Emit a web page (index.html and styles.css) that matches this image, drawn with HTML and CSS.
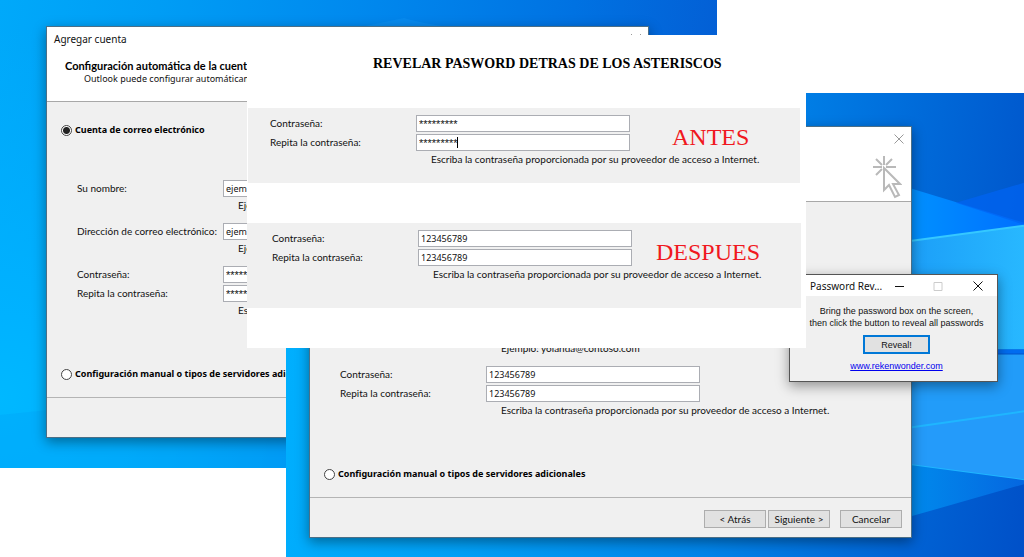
FILE: index.html
```html
<!DOCTYPE html>
<html lang="es">
<head>
<meta charset="utf-8">
<title>Revelar password detras de los asteriscos</title>
<link rel="stylesheet" href="styles.css">
</head>
<body>
<main class="canvas">
  <div class="desktop desktop-back">
    <svg class="wallpaper" viewBox="0 0 717 468" preserveAspectRatio="none" aria-hidden="true">
      <path d="M0 415L286 385V468H0z" fill="#00a6f8" opacity=".4"/>
      <path d="M404 18Q420 23 450 27H360z" fill="#25a5ff" opacity=".2"/>
    </svg>
  </div>

  <section class="window dialog dialog-back">
    <header class="dialog-head">
      <div class="titlebar"><span>Agregar cuenta</span>
        <svg class="close" viewBox="0 0 10 10" aria-hidden="true"><path d="M.5 .5l9 9M9.5 .5l-9 9" stroke="#333"/></svg>
      </div>
      <h2>Configuración automática de la cuenta</h2>
      <p class="sub">Outlook puede configurar automáticamente</p>
    </header>
    <div class="dialog-body">
      <label class="choice"><input type="radio" name="tipo" checked>Cuenta de correo electrónico</label>
      <div class="fields">
        <label for="n1">Su nombre:</label><input id="n1" type="text" value="ejemplo">
        <p class="hint">Ejemplo:</p>
        <label class="next" for="m1">Dirección de correo electrónico:</label><input class="next" id="m1" type="text" value="ejemplo">
        <p class="hint">Ejemplo:</p>
        <label class="next" for="p1">Contraseña:</label><input class="next stars" id="p1" type="text" value="*********">
        <label class="repeat" for="r1">Repita la contraseña:</label><input class="repeat stars" id="r1" type="text" value="*********">
        <p class="hint">Escriba</p>
      </div>
      <label class="choice manual"><input type="radio" name="tipo">Configuración manual o tipos de servidores adicionales</label>
    </div>
    <footer class="dialog-foot"></footer>
  </section>

  <div class="desktop desktop-front">
    <svg class="wallpaper" viewBox="0 0 738 465" preserveAspectRatio="none" aria-hidden="true">
      <defs>
        <linearGradient id="beam" x1="0" y1="0" x2="1" y2="0"><stop offset="0" stop-color="#0090ff"/><stop offset="1" stop-color="#0070ff"/></linearGradient>
        <linearGradient id="pane" x1="0" y1="0" x2="1" y2="0"><stop offset="0" stop-color="#1c9ff8"/><stop offset="1" stop-color="#28b8ff"/></linearGradient>
        <linearGradient id="floor" x1="0" y1="0" x2="1" y2="0"><stop offset="0" stop-color="#0089ec"/><stop offset="1" stop-color="#0567e0"/></linearGradient>
      </defs>
      <path d="M626 96L738 130V240H626z" fill="url(#beam)"/>
      <path d="M670 110L738 90V132z" fill="#0064f4" opacity=".7"/>
      <path d="M626 148L738 133V257H626z" fill="url(#pane)"/>
      <path d="M626 148L738 133" stroke="#35c8ff" stroke-width="2"/>
      <path d="M626 257H738V261H626z" fill="#006cf0"/>
      <path d="M626 262H738V388L626 373z" fill="#229cf9"/>
      <path d="M626 335L738 319V388L626 373z" fill="#249bfa"/>
      <path d="M626 335L738 319M626 373L738 388" stroke="#1fb6ff" stroke-width="2"/>
      <path d="M626 373L738 388V392L626 424z" fill="url(#floor)"/>
    </svg>
  </div>

  <section class="window dialog dialog-front">
    <header class="dialog-head">
      <div class="titlebar"><span></span>
        <svg class="close" viewBox="0 0 10 10" aria-hidden="true"><path d="M.5 .5l9 9M9.5 .5l-9 9" stroke="#999"/></svg>
      </div>
      <svg class="pointer" viewBox="0 0 30 44" aria-hidden="true">
        <g fill="none" stroke="#b9b9b9" stroke-width="2"><path d="M12 1v9M1 12h9M14 12h10M4 4l6 6M20 4l-6 6M4 20l6-6"/><path d="M12 13v22l5-5 6 12 4-2-6-11h7z"/></g>
      </svg>
    </header>
    <div class="dialog-body">
      <div class="fields">
        <p class="hint">Ejemplo: yolanda@contoso.com</p>
        <label class="next" for="p2">Contraseña:</label><input class="next" id="p2" type="text" value="123456789">
        <label class="repeat" for="r2">Repita la contraseña:</label><input class="repeat" id="r2" type="text" value="123456789">
        <p class="hint">Escriba la contraseña proporcionada por su proveedor de acceso a Internet.</p>
      </div>
      <label class="choice manual"><input type="radio" name="manual">Configuración manual o tipos de servidores adicionales</label>
    </div>
    <footer class="dialog-foot">
      <button type="button">&lt; Atrás</button>
      <button type="button">Siguiente &gt;</button>
      <button type="button" class="cancel">Cancelar</button>
    </footer>
  </section>

  <section class="window popup">
    <header class="popup-bar"><span>Password Rev...</span>
      <svg viewBox="0 0 88 10" aria-hidden="true"><path d="M0 5.500h9" stroke="#111"/><path d="M39 1.500h8v8h-8z" fill="none" stroke="#ccc"/><path d="M78.500 .5l9 9M87.500 .5l-9 9" stroke="#111"/></svg>
    </header>
    <div class="popup-body">
      <p>Bring the password box on the screen,<br>then click the button to reveal all passwords</p>
      <button type="button">Reveal!</button>
      <a href="#">www.rekenwonder.com</a>
    </div>
  </section>

  <section class="compare">
    <h1>REVELAR PASWORD DETRAS DE LOS ASTERISCOS</h1>
    <div class="strip before">
      <div class="fields">
        <label for="p3">Contraseña:</label><input class="stars" id="p3" type="text" value="*********">
        <label class="repeat" for="r3">Repita la contraseña:</label><span class="repeat typing"><input class="stars" id="r3" type="text" value="*********"><i class="caret"></i></span>
        <p class="hint">Escriba la contraseña proporcionada por su proveedor de acceso a Internet.</p>
        <h3>ANTES</h3>
      </div>
    </div>
    <div class="strip after">
      <div class="fields">
        <label for="p4">Contraseña:</label><input id="p4" type="text" value="123456789">
        <label class="repeat" for="r4">Repita la contraseña:</label><input class="repeat" id="r4" type="text" value="123456789">
        <p class="hint">Escriba la contraseña proporcionada por su proveedor de acceso a Internet.</p>
        <h3>DESPUES</h3>
      </div>
    </div>
  </section>
</main>
</body>
</html>
```

FILE: styles.css
```css
* { box-sizing: border-box; }
body {
  margin: 0;
  background: #fff;
  color: #111;
  font: 10px/12px Lato, "Noto Sans", sans-serif;
}
h1, h2, h3, p { margin: 0; }
input, button { font: inherit; color: inherit; }

.canvas { position: relative; min-height: 557px; overflow: hidden; }

/* Wallpapers */
.desktop { position: absolute; }
.desktop-back {
  left: 0; top: 0; width: 717px; height: 468px;
  background: linear-gradient(100deg, #00a9fa 0%, #009df5 20%, #0089ee 45%, #0072e2 72%, #0556cf 100%);
}
.desktop-back::before {
  content: ""; position: absolute; inset: 0;
  background: radial-gradient(circle at 0 85%, #00b8ff 0%, #00b2ff 10%, transparent 45%);
}
.desktop-front {
  left: 286px; right: 0; top: 93px; bottom: 0;
  background: linear-gradient(98deg, #00b2ff 0%, #009ff6 30%, #0084e9 60%, #0070dd 75%, #0050c8 100%);
}
.wallpaper { position: absolute; inset: 0; width: 100%; height: 100%; }

/* Windows */
.window {
  position: absolute;
  display: flex;
  flex-direction: column;
  background: #f0f0f0;
  border: 1px solid #4c6f86;
  box-shadow: 0 4px 12px rgba(0, 0, 0, .4);
}
.dialog { width: 603px; height: 412px; }
.dialog-back { left: 46px; top: 26px; }
.dialog-front { left: 309px; top: 126px; }

.dialog-head {
  position: relative;
  height: 75px;
  background: #fff;
  border-bottom: 1px solid #a8a8a8;
}
.titlebar {
  display: flex;
  justify-content: space-between;
  align-items: center;
  height: 24px;
  padding: 0 7px;
  font: 10px/12px "Noto Sans", sans-serif;
}
.close { width: 10px; height: 10px; }
.dialog-head h2 { padding: 9px 0 1px 18px; font-size: 11px; line-height: 12px; color: #000; }
.sub { padding-left: 37px; font: 9px/12px "Noto Sans", sans-serif; }
.pointer { position: absolute; right: 9px; top: 28px; width: 30px; height: 44px; }

.dialog-body {
  display: flex;
  flex: 1;
  flex-direction: column;
  justify-content: flex-end;
  padding: 0 14px 17px;
}
.choice {
  display: flex;
  align-items: center;
  gap: 3px;
  color: #000;
  font: 700 9px/12px "Noto Sans", sans-serif;
}
.choice input {
  appearance: none;
  width: 11px; height: 11px;
  margin: 0;
  border: 1px solid #444;
  border-radius: 50%;
  background: #fff;
}
.choice input:checked { background: radial-gradient(circle, #222 0 3px, #fff 4px); }
.manual { margin-top: 51px; }

.fields {
  display: grid;
  grid-template-columns: 146px 214px auto;
  justify-content: start;
  align-items: center;
}
.dialog .fields { padding-left: 16px; }
.dialog-back .fields { margin-top: 44px; }
.fields label { grid-column: 1; padding-bottom: 2px; }
.fields input {
  grid-column: 2;
  width: 100%; height: 17px;
  padding: 0 2px;
  border: 1px solid #abadb3;
  border-radius: 0;
  background: #fff;
  font: 9px/12px "Noto Sans", sans-serif;
}
.fields .stars { font: 11px/12px "Liberation Sans", sans-serif; }
.hint { grid-column: 2 / 4; padding-left: 15px; line-height: 13px; margin-top: 2px; white-space: nowrap; }
.next { margin-top: 11px; }
.repeat { margin-top: 2px; }
.typing { position: relative; display: flex; }
.caret { position: absolute; left: 41px; top: 3px; width: 1px; height: 11px; background: #000; }

.dialog-foot {
  display: flex;
  justify-content: flex-end;
  align-items: center;
  gap: 2px;
  height: 40px;
  padding: 2px 9px 0 0;
  border-top: 1px solid #b4b4b4;
}
button { padding: 0; border: 1px solid #adadad; border-radius: 0; background: #e1e1e1; }
.dialog-foot button { width: 62px; height: 18px; }
.dialog-foot .cancel { margin-left: 8px; }

/* Password revealer */
.popup { left: 789px; top: 274px; width: 209px; height: 108px; border-color: #555; }
.popup-bar {
  display: flex;
  justify-content: space-between;
  align-items: center;
  height: 21px;
  padding: 0 14px 0 20px;
  background: #fff;
  font: 10px/12px "Noto Sans", sans-serif;
}
.popup-bar svg { width: 88px; height: 10px; }
.popup-body {
  display: flex;
  flex-direction: column;
  align-items: center;
  padding: 9px 0 0 6px;
  font: 9px/12px "Liberation Sans", sans-serif;
  white-space: nowrap;
  text-align: center;
}
.popup-body button { width: 67px; height: 19px; margin: 6px 0; border: 2px solid #0078d7; }
.popup-body a { color: #0000ee; }

/* Comparison sheet */
.compare {
  position: absolute;
  left: 247px; top: 35px; width: 559px; height: 313px;
  background: #fff;
}
.compare h1 {
  padding: 20px 0 35px 126px;
  font: 700 14px/18px "Liberation Serif", serif;
  color: #000;
  white-space: nowrap;
}
.strip { background: #f0f0f0; }
.before { height: 75px; margin: 0 6px 0 1px; padding: 7px 0 0 22px; }
.after { height: 85px; margin: 40px 5px 0 0; padding: 7px 0 0 25px; }
.strip h3 {
  grid-column: 3;
  grid-row: 1 / 3;
  padding: 8px 0 0 42px;
  font: 400 24px/28px "Liberation Serif", serif;
  color: #f01820;
}
.after h3 { padding-left: 24px; }
```
